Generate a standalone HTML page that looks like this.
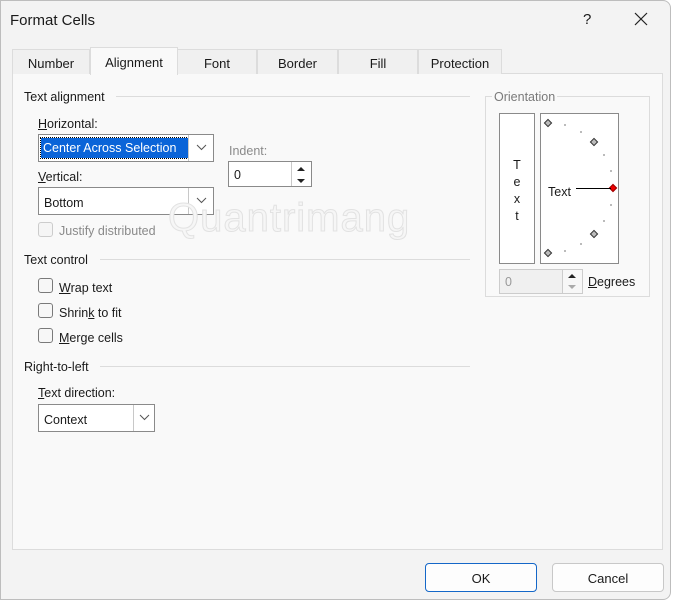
<!DOCTYPE html>
<html><head><style>
*{box-sizing:border-box;margin:0;padding:0}
body{width:675px;height:603px;overflow:hidden;background:#fff;font-family:"Liberation Sans",sans-serif;font-size:12.5px;color:#1a1a1a;position:relative}
.a{position:absolute;white-space:nowrap}
#dlg{position:absolute;left:0;top:0;width:671px;height:600px;background:#f3f3f3;border:1px solid #bdbdbd;border-radius:0 8px 8px 0}
.tab{position:absolute;top:49px;height:25px;border:1px solid #dcdcdc;border-bottom:none;background:#f0f0f0;text-align:center;line-height:27px;font-size:13px}
.grp{position:absolute;height:1px;background:#dcdcdc}
.box{position:absolute;background:#fff;border:1px solid #8a8a8a}
.cb{position:absolute;width:15px;height:15px;border:1px solid #7a7a7a;border-radius:3px;background:#f7f7f7}
.dd{position:absolute;width:25px;top:0;bottom:0;right:0;border-left:1px solid #c8c8c8;background:#fff}
.dd svg{position:absolute;left:7px;top:9px}
u{text-decoration:underline}
.btn{position:absolute;top:563px;height:29px;border:1px solid #c8c8c8;border-radius:4px;background:#fdfdfd;text-align:center;line-height:30px;font-size:13px}
.dot{position:absolute;width:2px;height:2px;background:#bbb}
.dia{position:absolute;width:6px;height:6px;transform:rotate(45deg);border:1px solid #333;background:#bbb}
.t{margin-top:1px}
</style></head><body>
<div id="dlg"></div>
<div class="a" style="left:10px;top:12px;font-size:15px;color:#1a1a1a">Format Cells</div>
<div class="a" style="left:583px;top:11px;font-size:15px">?</div>
<svg class="a" style="left:634px;top:12px" width="14" height="14"><path d="M1 1L13 13M13 1L1 13" stroke="#222" stroke-width="1.2"/></svg>

<div class="a" style="left:12px;top:73px;width:651px;height:477px;background:#f9f9f9;border:1px solid #dcdcdc"></div>
<div class="tab" style="left:12px;width:78px">Number</div>
<div class="tab" style="left:90px;width:88px;top:47px;height:28px;background:#f9f9f9;border-color:#dcdcdc;line-height:30px">Alignment</div>
<div class="tab" style="left:177px;width:80px">Font</div>
<div class="tab" style="left:257px;width:81px">Border</div>
<div class="tab" style="left:338px;width:80px">Fill</div>
<div class="tab" style="left:418px;width:84px">Protection</div>

<div class="a" style="left:24px;top:90px">Text alignment</div>
<div class="grp" style="left:116px;top:96px;width:354px"></div>
<div class="a" style="left:38px;top:117px"><u>H</u>orizontal:</div>
<div class="box" style="left:38px;top:134px;width:176px;height:28px">
 <div class="a" style="left:2px;top:3px;width:151px;height:20px;background:#0a64d8;outline:1px dotted #000;color:#fff;line-height:21px;padding-left:2px">Center Across Selection</div>
 <div class="dd"><svg width="11" height="7"><path d="M1 1L5.5 5.5L10 1" stroke="#555" fill="none"/></svg></div>
</div>
<div class="a" style="left:229px;top:144px;color:#8a8a8a">Indent:</div>
<div class="box" style="left:228px;top:161px;width:84px;height:26px">
 <div class="a" style="left:5px;top:6px">0</div>
 <div class="a" style="left:62px;top:0;width:20px;height:24px;border-left:1px solid #c8c8c8"></div>
 <svg class="a" style="left:67px;top:4px" width="10" height="18"><path d="M1 5L5 1L9 5Z M1 13L5 17L9 13Z" fill="#222"/></svg>
</div>
<div class="a" style="left:38px;top:170px"><u>V</u>ertical:</div>
<div class="box" style="left:38px;top:187px;width:176px;height:28px">
 <div class="a" style="left:5px;top:8px">Bottom</div>
 <div class="dd"><svg width="11" height="7"><path d="M1 1L5.5 5.5L10 1" stroke="#555" fill="none"/></svg></div>
</div>
<div class="cb" style="left:38px;top:222px;border-color:#ccc;background:#f5f5f5"></div>
<div class="a" style="left:59px;top:224px;color:#8a8a8a">Justify distributed</div>
<div class="a" style="left:168px;top:196px;font-size:40px;color:#f6f6f6;-webkit-text-stroke:1px #e2e2e2;letter-spacing:1px">Quantrimang</div>

<div class="a" style="left:24px;top:253px">Text control</div>
<div class="grp" style="left:100px;top:259px;width:370px"></div>
<div class="cb" style="left:38px;top:278px"></div><div class="a" style="left:59px;top:281px"><u>W</u>rap text</div>
<div class="cb" style="left:38px;top:303px"></div><div class="a" style="left:59px;top:306px">Shrin<u>k</u> to fit</div>
<div class="cb" style="left:38px;top:328px"></div><div class="a" style="left:59px;top:331px"><u>M</u>erge cells</div>

<div class="a" style="left:24px;top:360px">Right-to-left</div>
<div class="grp" style="left:100px;top:366px;width:370px"></div>
<div class="a" style="left:38px;top:386px"><u>T</u>ext direction:</div>
<div class="box" style="left:38px;top:404px;width:117px;height:28px">
 <div class="a" style="left:5px;top:8px">Context</div>
 <div class="dd" style="width:21px"><svg width="11" height="7" style="left:5px"><path d="M1 1L5.5 5.5L10 1" stroke="#555" fill="none"/></svg></div>
</div>

<div class="a" style="left:485px;top:96px;width:165px;height:201px;border:1px solid #dcdcdc"></div>
<div class="a" style="left:492px;top:90px;background:#f9f9f9;padding:0 2px;color:#7a7a7a">Orientation</div>
<div class="a" style="left:499px;top:113px;width:36px;height:151px;background:#fff;border:1px solid #8a8a8a"></div>
<div class="a" style="left:513px;top:157px;line-height:17px;text-align:center;width:8px">T<br>e<br>x<br>t</div>
<div class="a" style="left:540px;top:113px;width:79px;height:151px;background:#fff;border:1px solid #8a8a8a"></div>
<div class="dia" style="left:545px;top:120px"></div>
<div class="dia" style="left:591px;top:139px"></div>
<div class="dia" style="left:591px;top:231px"></div>
<div class="dia" style="left:545px;top:250px"></div>
<div class="dia" style="left:610px;top:185px;background:#e00;border-color:#900"></div>
<div class="dot" style="left:564px;top:124px"></div><div class="dot" style="left:580px;top:131px"></div>
<div class="dot" style="left:603px;top:154px"></div><div class="dot" style="left:610px;top:170px"></div>
<div class="dot" style="left:610px;top:204px"></div><div class="dot" style="left:603px;top:220px"></div>
<div class="dot" style="left:580px;top:243px"></div><div class="dot" style="left:564px;top:250px"></div>
<div class="a" style="left:548px;top:185px">Text</div>
<div class="a" style="left:576px;top:188px;width:35px;height:1px;background:#000"></div>
<div class="a" style="left:499px;top:269px;width:84px;height:25px;background:#f0f0f0;border:1px solid #ccc">
 <div class="a" style="left:5px;top:5px;color:#999">0</div>
 <div class="a" style="left:62px;top:0;width:20px;height:23px;border-left:1px solid #ccc;background:#f7f7f7"></div>
 <svg class="a" style="left:67px;top:3px" width="10" height="18"><path d="M1 5L5 1L9 5Z" fill="#222"/><path d="M1 12L5 16L9 12Z" fill="#aaa"/></svg>
</div>
<div class="a" style="left:588px;top:275px"><u>D</u>egrees</div>

<div class="btn" style="left:425px;width:112px;border-color:#1467c8">OK</div>
<div class="btn" style="left:552px;width:112px">Cancel</div>
</body></html>
